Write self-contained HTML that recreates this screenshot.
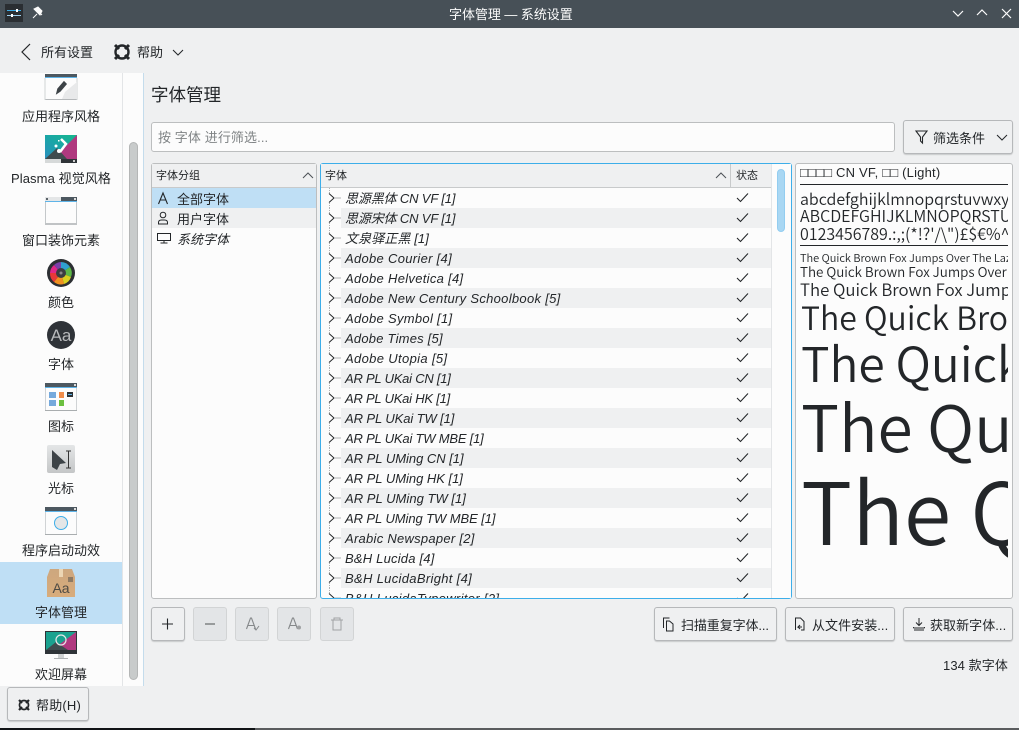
<!DOCTYPE html>
<html lang="zh"><head><meta charset="utf-8"><title>字体管理 — 系统设置</title>
<style>
*{box-sizing:border-box}
html,body{margin:0;padding:0;width:1019px;height:730px;overflow:hidden;background:#eff0f1}
body{position:relative;font:13px/20px "Liberation Sans","Noto Sans CJK SC",sans-serif;color:#232629}
.a{position:absolute}
.t{position:absolute;white-space:nowrap;line-height:20px}
.c{position:absolute;white-space:nowrap;line-height:20px;text-align:center;left:0;width:122px}
.b{position:absolute;background:#eff0f1;border:1px solid #b6b8ba;border-radius:3px;box-shadow:0 1px 1px #c8cacb}
.d{position:absolute;top:607px;width:34px;height:34px;background:#e3e5e7;border:1px solid #d2d4d5;border-radius:3px}
.p{position:absolute;background:#fcfcfc;border:1px solid #bcbebf;border-radius:3px}
.r{position:absolute;left:341px;width:430px;height:20px;background:#eff0f1}
.f{position:absolute;left:24px;white-space:nowrap;line-height:20px;font-style:italic;height:20px}
svg{position:absolute}
</style></head><body>
<!-- title bar -->
<div class="a" style="left:0;top:0;width:1019px;height:28px;background:#475057"></div>
<svg style="left:0;top:0" width="1019" height="28" fill="none">
<rect x="5" y="4" width="18" height="18" fill="#2a2e32"/>
<path d="M7 10.500h14" stroke="#3daee9"/><path d="M7 15.500h14" stroke="#9fd0ee"/><rect x="16" y="9" width="2" height="3" fill="#fff"/><rect x="11" y="14" width="2" height="3" fill="#fff"/>
<path d="M33 18l4-4M36 9l6 6M38 7l4 4-2 4-6-6z" stroke="#fcfcfc" fill="#fcfcfc"/>
<path d="M953 11l5 5 5-5M977 15l5-5 5 5M1002 9l9 9M1011 9l-9 9" stroke="#fcfcfc" stroke-width="1.200"/>
</svg>
<div class="t" style="left:449px;top:5px;color:#fcfcfc;letter-spacing:-.05px">字体管理 — 系统设置</div>
<!-- toolbar -->
<svg style="left:0;top:28px" width="200" height="45" fill="none" stroke="#232629">
<path d="M30 16l-8 8 8 8" stroke-width="1.200"/>
<circle cx="122" cy="24" r="6.500" stroke-width="2.400"/><path d="M115 17l4 4M129 17l-4 4M115 31l4-4M129 31l-4-4" stroke-width="3"/>
<path d="M173 22l5 5 5-5"/>
</svg>
<div class="t" style="left:41px;top:43px">所有设置</div>
<div class="t" style="left:137px;top:43px">帮助</div>
<!-- sidebar -->
<div class="a" style="left:0;top:73px;width:122px;height:613px;background:#fcfcfc"></div>
<div class="a" style="left:122px;top:73px;width:22px;height:613px;background:#fcfcfc;border-left:1px solid #e3e5e7;border-right:1px solid #c4dcec"></div>
<div class="a" style="left:129px;top:142px;width:9px;height:538px;background:#c8cbcb;border:1px solid #b4b6b6;border-radius:5px"></div>
<div class="a" style="left:0;top:562px;width:122px;height:62px;background:#bfdff5"></div>
<svg style="left:0;top:0" width="122" height="686">
<defs>
<linearGradient id="pl" x1="0" y1="1" x2="1" y2="0"><stop offset="0" stop-color="#2a8fc0"/><stop offset=".5" stop-color="#1aa6a6"/><stop offset="1" stop-color="#15b88c"/></linearGradient>
<linearGradient id="g" x1="0" y1="0" x2="0" y2="1"><stop offset="0" stop-color="#e4e6e7"/><stop offset="1" stop-color="#c4c6c7"/></linearGradient>
<linearGradient id="box" x1="0" y1="0" x2="0" y2="1"><stop offset="0" stop-color="#cda77e"/><stop offset="1" stop-color="#d8ac7c"/></linearGradient>
</defs>
<!-- app style -->
<rect x="45" y="74" width="32" height="26" fill="#fcfcfc"/><rect x="45" y="74" width="32" height="3" fill="#4d5860"/><rect x="45" y="77" width="32" height="1" fill="#5fb4e8"/>
<rect x="45" y="99" width="32" height="1" fill="#b5b8ba"/><path d="M45 78v22M77 78v22" stroke="#d0d3d5"/>
<path d="M65 92l12-10v17H62z" fill="#e8e9ea"/>
<path d="M58 89l6-7 2 2-6 7-3 2z" fill="#3d4347" stroke="#3d4347" stroke-width="1.500"/>
<!-- plasma -->
<rect x="45" y="135" width="32" height="24" fill="url(#pl)"/><path d="M77 135v24H53z" fill="#b0397f"/><path d="M45 159l12-11 10 11z" fill="#3f4c4e"/>
<path d="M61 139l5 5-6 8" stroke="#fff" stroke-width="2.500" fill="none"/><circle cx="59" cy="151" r="2" fill="#fff"/><circle cx="56" cy="146" r="1.500" fill="#fff"/><rect x="58" y="140" width="1.500" height="1.500" fill="#fff"/>
<rect x="45" y="159" width="16" height="4" fill="#d6d9d9"/><rect x="61" y="159" width="16" height="4" fill="#2f3438"/><rect x="73" y="160" width="2" height="2" fill="#ccc"/>
<!-- window deco -->
<rect x="45.500" y="197.500" width="31" height="27" fill="#fcfcfc" stroke="#c4c8ca"/><rect x="45" y="197" width="16" height="4" fill="#e4e6e7"/><rect x="61" y="197" width="16" height="4" fill="#4d5860"/><rect x="45" y="201" width="32" height="1" fill="#5fb4e8"/><rect x="46" y="198" width="2" height="2" fill="#5a6268"/><rect x="74" y="198" width="2" height="2" fill="#ddd"/><rect x="45" y="223" width="32" height="2" fill="#c0c3c5"/>
<!-- colors -->
<circle cx="61" cy="273" r="14" fill="#2c2f33"/>
<path d="M61 273V262a11 11 0 0 1 9 5z" fill="#2f9fd0"/><path d="M61 273l9-6a11 11 0 0 1 1 10z" fill="#5cb848"/><path d="M61 273l10 4a11 11 0 0 1-7 7z" fill="#d8d020"/><path d="M61 273l3 11a11 11 0 0 1-10-2z" fill="#f09020"/><path d="M61 273l-7 9a11 11 0 0 1-4-9z" fill="#e83838"/><path d="M61 273H50a11 11 0 0 1 4-8z" fill="#e02888"/><path d="M61 273l-7-8a11 11 0 0 1 7-3z" fill="#7a3fa8"/>
<circle cx="61" cy="273" r="5" fill="#3a3d41"/><circle cx="61" cy="273" r="1.500" fill="#888"/>
<!-- font -->
<circle cx="61" cy="335" r="14" fill="#2f3338"/>
<text x="61" y="341" text-anchor="middle" font-size="17" fill="#b8babc" font-family="Liberation Sans">Aa</text>
<!-- icons -->
<rect x="45.500" y="383.500" width="31" height="27" fill="#fcfcfc" stroke="#d0d3d5"/><rect x="45" y="383" width="32" height="4" fill="#4d5860"/><rect x="45" y="387" width="32" height="1" fill="#5fb4e8"/><rect x="74" y="384" width="2" height="2" fill="#ddd"/><rect x="45" y="410" width="32" height="1" fill="#a9adaf"/>
<rect x="49" y="392" width="7" height="6" fill="#75a9dc"/><rect x="59" y="392" width="5" height="6" fill="#f08d4b"/><rect x="67" y="392" width="6" height="5" fill="#2c3135"/><rect x="68" y="394" width="4" height="1" fill="#5fb4e8"/><rect x="49" y="400" width="7" height="6" fill="#75a9dc"/><rect x="59" y="400" width="5" height="6" fill="#6cc040"/>
<!-- cursors -->
<rect x="47" y="445" width="28" height="28" rx="2" fill="url(#g)"/>
<path d="M52 450l14 13-6 1-3 6-5-3z" fill="#3d4347"/><path d="M66 451h5M66 468h5M68.500 451v17" stroke="#333" fill="none"/>
<!-- launch -->
<rect x="45.500" y="507.500" width="31" height="27" fill="#fcfcfc" stroke="#d0d3d5"/><rect x="45" y="507" width="32" height="4" fill="#4d5860"/><rect x="45" y="511" width="32" height="1" fill="#5fb4e8"/><rect x="74" y="508" width="2" height="2" fill="#ddd"/><rect x="45" y="534" width="32" height="1" fill="#a9adaf"/>
<circle cx="61" cy="523" r="6.500" fill="#e4e6e7" stroke="#3daee9"/>
<!-- package -->
<path d="M50 569h22l3 8v20H47v-20z" fill="url(#box)"/><rect x="59" y="569" width="4" height="8" fill="#ecd6b4"/><rect x="68" y="577" width="5" height="5" fill="#8e7a63"/>
<text x="61" y="593" text-anchor="middle" font-size="14" fill="#4d4a44" font-family="Liberation Sans">Aa</text>
<!-- monitor -->
<rect x="45" y="631" width="32" height="23" fill="#2f3438"/><rect x="46" y="632" width="30" height="18" fill="#1aa28f"/><path d="M76 632v18H52z" fill="#b0397f"/><path d="M46 650l10-8 12 8z" fill="#3f4c4e"/><circle cx="61" cy="640" r="5" fill="none" stroke="#e8e8e8" stroke-width="1.200"/><rect x="58" y="654" width="6" height="4" fill="#cfd2d3"/><rect x="54" y="658" width="14" height="1" fill="#b0b3b5"/>
</svg>
<div class="c" style="top:107px">应用程序风格</div>
<div class="c" style="top:169px;letter-spacing:.1px">Plasma 视觉风格</div>
<div class="c" style="top:231px">窗口装饰元素</div>
<div class="c" style="top:293px">颜色</div>
<div class="c" style="top:355px">字体</div>
<div class="c" style="top:417px">图标</div>
<div class="c" style="top:479px">光标</div>
<div class="c" style="top:541px">程序启动动效</div>
<div class="c" style="top:603px">字体管理</div>
<div class="c" style="top:665px">欢迎屏幕</div>
<!-- heading -->
<div class="t" style="left:151px;top:85px;font-size:17.5px">字体管理</div>
<div class="p" style="left:151px;top:122px;width:744px;height:30px"></div>
<div class="t" style="left:158px;top:128px;color:#7f8385;letter-spacing:.1px">按 字体 进行筛选...</div>
<div class="b" style="left:903px;top:120px;width:110px;height:34px"></div>
<svg style="left:903px;top:120px" width="110" height="34" fill="none" stroke="#232629"><path d="M13 11h11l-4.500 6v6l-2-2v-4z" stroke-width="1.100"/><path d="M94 15l5 5 5-5"/></svg>
<div class="t" style="left:933px;top:129px">筛选条件</div>
<!-- group panel -->
<div class="p" style="left:151px;top:163px;width:166px;height:436px"></div>
<div class="a" style="left:152px;top:164px;width:164px;height:24px;background:#eff0f1;border-bottom:1px solid #c8cacb"></div>
<div class="t" style="left:156px;top:166px;font-size:11px">字体分组</div>
<div class="a" style="left:152px;top:188px;width:164px;height:20px;background:#bfdff5"></div>
<div class="a" style="left:152px;top:208px;width:164px;height:20px;background:#eff0f1"></div>
<svg style="left:145px;top:155px" width="180" height="90" fill="none" stroke="#232629"><path d="M158 23l5-5 5 5" stroke="#4d5257"/>
<path d="M13.500 49l4.500-11 4.500 11M15 45h6" stroke-width="1.100"/>
<circle cx="18" cy="60" r="2.800"/><path d="M13.500 69v-1.500q0-2.500 3-2.500h3q3 0 3 2.500V69z"/>
<rect x="12.500" y="78.500" width="13" height="7"/><path d="M15.500 88h7M19 86v2"/></svg>
<div class="t" style="left:177px;top:190px">全部字体</div>
<div class="t" style="left:177px;top:210px">用户字体</div>
<div class="t" style="left:177px;top:230px;font-style:italic">系统字体</div>
<!-- font tree -->
<div class="a" style="left:320px;top:163px;width:472px;height:436px;background:#fcfcfc;border:1px solid #3daee9;border-radius:3px;overflow:hidden"></div>
<div class="a" style="left:321px;top:164px;width:470px;height:24px;background:#eff0f1;border-bottom:1px solid #c8cacb"></div>
<div class="a" style="left:730px;top:164px;width:1px;height:23px;background:#c8cacb"></div>
<div class="a" style="left:771px;top:164px;width:20px;height:434px;background:#fcfcfc;border-left:1px solid #e3e5e7"></div>
<div class="a" style="left:777px;top:169px;width:8px;height:63px;background:#a9d7f3;border:1px solid #93cdf0;border-radius:4px"></div>
<div class="t" style="left:325px;top:166px;font-size:11px">字体</div>
<div class="t" style="left:736px;top:166px;font-size:11px">状态</div>
<div class="r" style="top:208px"></div><div class="r" style="top:248px"></div><div class="r" style="top:288px"></div><div class="r" style="top:328px"></div><div class="r" style="top:368px"></div><div class="r" style="top:408px"></div><div class="r" style="top:448px"></div><div class="r" style="top:488px"></div><div class="r" style="top:528px"></div><div class="r" style="top:568px"></div>
<svg style="left:0;top:0" width="1019" height="730" fill="none">
<defs>
<pattern id="tr" patternUnits="userSpaceOnUse" x="326" y="188" width="20" height="20"><path d="M3.500 0v5M3.500 15v5" stroke="#b0b2b4" stroke-dasharray="1 1"/><path d="M3 5.500l5 4.500-5 4.500" stroke="#232629" stroke-width="1"/><path d="M9 10h6" stroke="#b0b2b4"/></pattern>
<pattern id="ck" patternUnits="userSpaceOnUse" x="735" y="188" width="16" height="20"><path d="M2 10l3.500 3.500L13 5.500" stroke="#232629" stroke-width="1.100"/></pattern>
</defs>
<path d="M716 178l5-5 5 5" stroke="#4d5257"/>
<rect x="326" y="188" width="15" height="410" fill="url(#tr)"/>
<rect x="735" y="188" width="16" height="410" fill="url(#ck)"/>
</svg>
<div class="a" style="left:321px;top:188px;width:450px;height:410px;overflow:hidden">
<div class="f" style="top:1px;letter-spacing:-.15px">思源黑体 CN VF [1]</div>
<div class="f" style="top:21px;letter-spacing:-.15px">思源宋体 CN VF [1]</div>
<div class="f" style="top:41px;letter-spacing:.1px">文泉驿正黑 [1]</div>
<div class="f" style="top:61px;letter-spacing:.3px">Adobe Courier [4]</div>
<div class="f" style="top:81px;letter-spacing:.3px">Adobe Helvetica [4]</div>
<div class="f" style="top:101px;letter-spacing:.3px">Adobe New Century Schoolbook [5]</div>
<div class="f" style="top:121px;letter-spacing:.3px">Adobe Symbol [1]</div>
<div class="f" style="top:141px;letter-spacing:.22px">Adobe Times [5]</div>
<div class="f" style="top:161px;letter-spacing:.35px">Adobe Utopia [5]</div>
<div class="f" style="top:181px;letter-spacing:-.23px">AR PL UKai CN [1]</div>
<div class="f" style="top:201px;letter-spacing:-.23px">AR PL UKai HK [1]</div>
<div class="f" style="top:221px;letter-spacing:-.1px">AR PL UKai TW [1]</div>
<div class="f" style="top:241px;letter-spacing:-.2px">AR PL UKai TW MBE [1]</div>
<div class="f" style="top:261px;letter-spacing:-.02px">AR PL UMing CN [1]</div>
<div class="f" style="top:281px;letter-spacing:-.02px">AR PL UMing HK [1]</div>
<div class="f" style="top:301px;letter-spacing:.03px">AR PL UMing TW [1]</div>
<div class="f" style="top:321px;letter-spacing:-.08px">AR PL UMing TW MBE [1]</div>
<div class="f" style="top:341px;letter-spacing:.27px">Arabic Newspaper [2]</div>
<div class="f" style="top:361px;letter-spacing:.2px">B&amp;H Lucida [4]</div>
<div class="f" style="top:381px;letter-spacing:.32px">B&amp;H LucidaBright [4]</div>
<div class="f" style="top:401px;letter-spacing:.33px">B&amp;H LucidaTypewriter [2]</div>
</div>
<!-- preview -->
<div class="p" style="left:795px;top:163px;width:218px;height:436px"></div>
<div class="t" style="left:800px;top:163px;letter-spacing:.2px">□□□□ CN VF, □□ (Light)</div>
<div class="a" style="left:800px;top:164px;width:208px;height:434px;overflow:hidden">
<svg style="left:0;top:0;overflow:hidden" width="208" height="434" viewBox="800 164 208 434" font-family="Noto Sans CJK SC,sans-serif" font-weight="350" fill="#232629">
<rect x="800" y="184" width="208" height="1"/><rect x="800" y="245" width="208" height="1"/>
<text x="800" y="205" font-size="16">abcdefghijklmnopqrstuvwxyz</text>
<text x="800" y="222" font-size="16">ABCDEFGHIJKLMNOPQRSTUVWXYZ</text>
<text x="800" y="240" font-size="16">0123456789.:,;(*!?'/\")£$€%^&amp;</text>
<text x="800" y="262" font-size="11">The Quick Brown Fox Jumps Over The Lazy Dog</text>
<text x="800" y="277" font-size="13.400">The Quick Brown Fox Jumps Over The</text>
<text x="800" y="296" font-size="16.800">The Quick Brown Fox Jumps Over</text>
<text x="801" y="330" font-size="32">The Quick Brown Fox</text>
<text x="801" y="382" font-size="48">The Quick Brown</text>
<text x="801" y="452" font-size="64">The Quick</text>
<text x="801" y="545" font-size="86">The Quick</text>
</svg></div>
<!-- buttons -->
<div class="b" style="left:151px;top:607px;width:34px;height:34px"></div>
<div class="d" style="left:193px"></div><div class="d" style="left:235px"></div><div class="d" style="left:277px"></div><div class="d" style="left:320px"></div>
<svg style="left:0;top:0" width="360" height="660" fill="none">
<path d="M162 624h11M167.500 618.500v11" stroke="#232629" stroke-width="1.100"/>
<path d="M205 624h10" stroke="#85888a" stroke-width="1.600"/>
<path d="M246.500 629l4-11h1l4 11M248 625.500h6" stroke="#85888a" stroke-width="1.100"/><path d="M254 628l2 2 3-4" stroke="#85888a"/>
<path d="M288.500 629l4-11h1l4 11M290 625.500h6" stroke="#85888a" stroke-width="1.100"/><circle cx="299" cy="627.500" r="2" fill="#a0a2a4"/>
<path d="M331 620h12M334 620v-2h6v2M333 620v10h8v-10" stroke="#a0a2a4"/>
</svg>
<div class="b" style="left:654px;top:607px;width:123px;height:34px"></div>
<div class="b" style="left:785px;top:607px;width:110px;height:34px"></div>
<div class="b" style="left:903px;top:607px;width:110px;height:34px"></div>
<div class="b" style="left:7px;top:687px;width:82px;height:34px"></div>
<svg style="left:0;top:0" width="1019" height="730" fill="none" stroke="#232629">
<path d="M663.500 628v-10h4l2 0M666.500 631v-10h3l3.500 3v7z"/>
<path d="M795.500 630v-12h5l3.500 3.500V630h-3M802 627h-4l2-2M798 627l2 2"/>
<path d="M919 618v7M916 622.500l3 3 3-3M913.500 627v.5q0 .5 .5 .5h10q.5 0 .5-.5V627M914 630h10"/>
<circle cx="24" cy="705" r="4.500" stroke-width="1.700"/><path d="M19 700l3 3M29 700l-3 3M19 710l3-3M29 710l-3-3" stroke-width="2.200"/>
</svg>
<div class="t" style="left:681px;top:616px;letter-spacing:-.1px">扫描重复字体...</div>
<div class="t" style="left:812px;top:616px;letter-spacing:.05px">从文件安装...</div>
<div class="t" style="left:930px;top:616px;letter-spacing:.05px">获取新字体...</div>
<div class="t" style="right:11px;top:656px;letter-spacing:.1px">134 款字体</div>
<div class="t" style="left:36px;top:696px;letter-spacing:.2px">帮助(H)</div>
<!-- bottom edge -->
<div class="a" style="left:0;top:728px;width:255px;height:2px;background:#101316"></div>
<div class="a" style="left:255px;top:728px;width:764px;height:2px;background:#5a5c5e"></div>
</body></html>
